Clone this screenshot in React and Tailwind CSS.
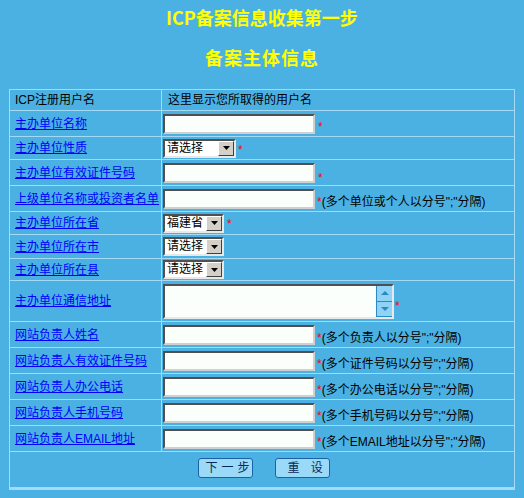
import React from "react";

const font = { fontFamily: '"Liberation Sans", "Noto Sans CJK SC", sans-serif' };

const Star = () => <span className="text-[#ff0000] text-[12px] leading-[12px]">*</span>;

const TextBox = ({ w = "w-[152px]" }) => (
  <input
    type="text"
    className={`${w} h-[20px] border-2 border-solid border-t-[#505050] border-l-[#505050] border-r-[#d0d0d0] border-b-[#d0d0d0] bg-[#fbfffb] outline-none`}
  />
);

const Select = ({ value, w }) => (
  <div
    className={`${w} h-[19px] flex border-2 border-solid border-t-[#505050] border-l-[#505050] border-r-[#e8e8e8] border-b-[#e8e8e8] bg-white`}
  >
    <span className="flex-1 pl-[2px] text-[12px] leading-[15px] text-black">{value}</span>
    <span className="w-[16px] h-[15px] flex items-center justify-center bg-[#d4d0c8] border border-solid border-t-white border-l-white border-r-[#404040] border-b-[#404040]">
      <svg width="7" height="4" viewBox="0 0 7 4">
        <path d="M0 0h7L3.5 4z" fill="#000" />
      </svg>
    </span>
  </div>
);

const Area = () => (
  <div className="w-[231px] h-[35px] flex border-2 border-solid border-t-[#505050] border-l-[#505050] border-r-[#e8e8e8] border-b-[#e8e8e8] bg-[#fbfffb]">
    <div className="flex-1" />
    <div className="w-[16px] flex flex-col bg-[#8fd4f6] border-l border-[#2a8ac4]">
      <div className="flex-1 flex items-center justify-center border-b border-[#2a8ac4]">
        <svg width="8" height="4" viewBox="0 0 8 4">
          <path d="M4 0L8 4H0z" fill="#2a8ac4" />
        </svg>
      </div>
      <div className="flex-1 flex items-center justify-center border-b border-[#2a8ac4]">
        <svg width="8" height="4" viewBox="0 0 8 4">
          <path d="M0 0h8L4 4z" fill="#2a8ac4" />
        </svg>
      </div>
    </div>
  </div>
);

const Note = ({ children }) => (
  <span className="text-[12px] leading-[14px] text-black ml-[2px] whitespace-nowrap">
    <Star />
    {children}
  </span>
);

const Row = ({ label, h, plain, children, align = "items-center" }) => (
  <div className={`flex ${h} border-b border-[#a3daf5]`}>
    <div className="w-[152px] shrink-0 border-r border-[#a3daf5] flex items-center pl-[5px]">
      {plain ? (
        <span className="text-[12px] text-black whitespace-nowrap">{label}</span>
      ) : (
        <a href="#" className="text-[12px] text-[#0000ff] underline whitespace-nowrap">
          {label}
        </a>
      )}
    </div>
    <div className={`flex-1 flex ${align} pl-[1px]`}>{children}</div>
  </div>
);

const noteRows = [
  ["网站负责人姓名", "(多个负责人以分号\";\"分隔)"],
  ["网站负责人有效证件号码", "(多个证件号码以分号\";\"分隔)"],
  ["网站负责人办公电话", "(多个办公电话以分号\";\"分隔)"],
  ["网站负责人手机号码", "(多个手机号码以分号\";\"分隔)"],
  ["网站负责人EMAIL地址", "(多个EMAIL地址以分号\";\"分隔)"],
];

const Btn = ({ children, pl }) => (
  <button
    type="button"
    className={`w-[55px] h-[20px] flex items-center ${pl} border border-[#1a62a6] rounded-[3px] bg-[#9ad9f8] text-[12px] leading-[14px] tracking-[4px] text-[#0a2a55] whitespace-pre`}
  >
    {children}
  </button>
);

export default function App() {
  return (
    <div className="w-[524px] h-[498px] bg-[#4bb1e2] pt-[7px]" style={font}>
      <h1
        className="text-center text-[18px] leading-[20px] font-bold text-[#ffff00]"
        style={{ fontFamily: '"Noto Sans CJK SC", sans-serif' }}
      >
        ICP备案信息收集第一步
      </h1>
      <h2
        className="mt-[20px] text-center text-[18px] leading-[20px] font-bold tracking-[1px] text-[#ffff00]"
        style={{ fontFamily: '"Noto Sans CJK SC", sans-serif' }}
      >
        备案主体信息
      </h2>

      <div className="mt-[22px] mx-auto w-[506px] border-l border-r border-t border-b-[3px] border-[#a3daf5]">
        <Row label="ICP注册用户名" plain h="h-[21px]">
          <span className="pl-[5px] text-[12px] text-black">这里显示您所取得的用户名</span>
        </Row>
        <Row label="主办单位名称" h="h-[26px]">
          <TextBox />
          <span className="ml-[3px] mt-[4px]">
            <Star />
          </span>
        </Row>
        <Row label="主办单位性质" h="h-[23px]">
          <Select value="请选择" w="w-[73px]" />
          <span className="ml-[2px] mt-[2px]">
            <Star />
          </span>
        </Row>
        <Row label="主办单位有效证件号码" h="h-[26px]">
          <TextBox />
          <span className="ml-[3px] mt-[8px]">
            <Star />
          </span>
        </Row>
        <Row label="上级单位名称或投资者名单" h="h-[26px]" align="items-end pb-[2px]">
          <TextBox />
          <Note>(多个单位或个人以分号";"分隔)</Note>
        </Row>
        <Row label="主办单位所在省" h="h-[23px]">
          <Select value="福建省" w="w-[61px]" />
          <span className="ml-[3px] mt-[2px] text-[12px] text-[#ff0000]">*</span>
        </Row>
        <Row label="主办单位所在市" h="h-[24px]">
          <Select value="请选择" w="w-[61px]" />
        </Row>
        <Row label="主办单位所在县" h="h-[22px]">
          <Select value="请选择" w="w-[61px]" />
        </Row>
        <Row label="主办单位通信地址" h="h-[41px]" align="items-end pb-[2px]">
          <Area />
          <span className="ml-[1px] mb-[2px]">
            <Star />
          </span>
        </Row>
        {noteRows.map(([label, note]) => (
          <Row key={label} label={label} h="h-[26px]" align="items-end pb-[2px]">
            <TextBox />
            <Note>{note}</Note>
          </Row>
        ))}
        <div className="h-[35px] flex justify-center gap-[22px] pt-[6px] pl-[3px]">
          <Btn pl="pl-[7px]">下一步</Btn>
          <Btn pl="pl-[12px]">重 设</Btn>
        </div>
      </div>
    </div>
  );
}
